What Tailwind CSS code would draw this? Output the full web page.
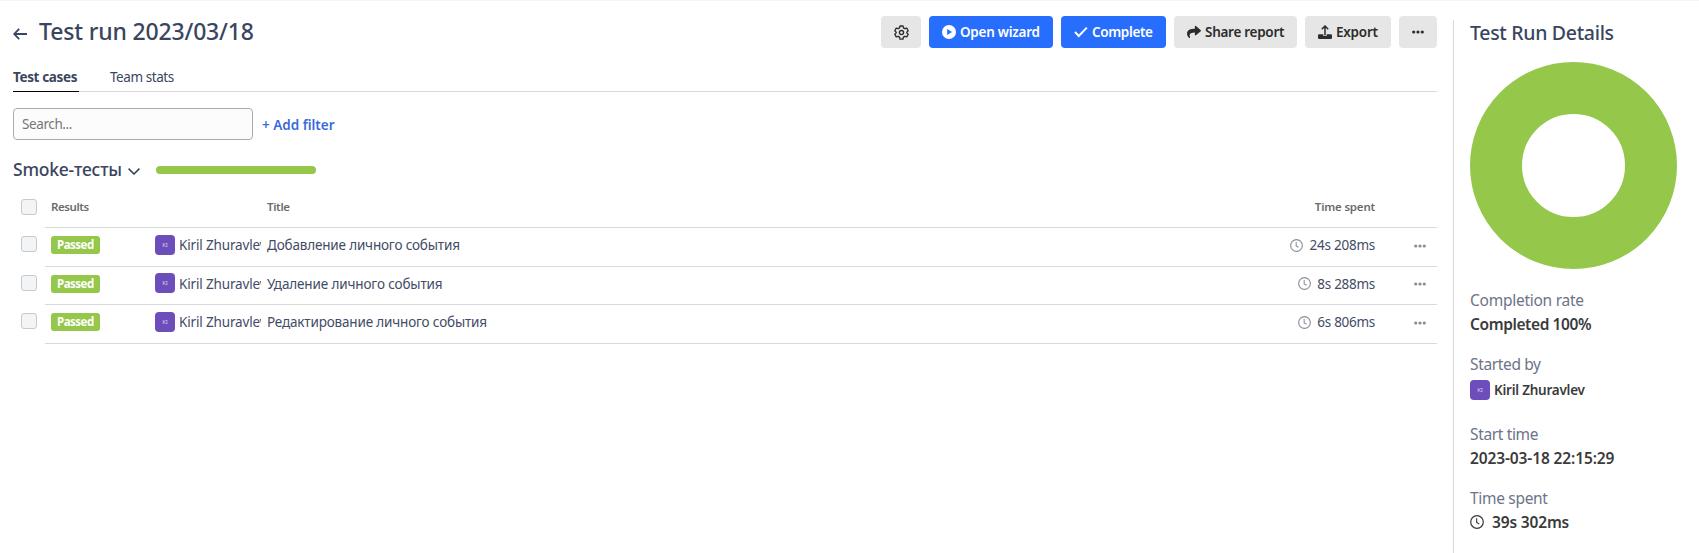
<!DOCTYPE html>
<html lang="en">
<head>
<meta charset="utf-8">
<title>Test run</title>
<script src="https://cdn.jsdelivr.net/npm/@tailwindcss/browser@4"></script>
</head>
<body class="h-[553px] overflow-hidden bg-white border-t border-[#f6f6f6] font-['Noto_Sans','Open_Sans',sans-serif] text-[13.5px] text-[#3a4560]">
<svg class="hidden">
  <symbol id="clock" viewBox="0 0 16 16"><circle cx="8" cy="8" r="7.2" fill="none" stroke="currentColor" stroke-width="1.4"/><path d="M7.6 3.8V8.6L10.6 10.2" fill="none" stroke="currentColor" stroke-width="1.3"/></symbol>
  <symbol id="dots" viewBox="0 0 12 4"><circle cx="1.7" cy="2" r="1.6"/><circle cx="6" cy="2" r="1.6"/><circle cx="10.3" cy="2" r="1.6"/></symbol>
</svg>
<div class="flex h-full">
  <main class="w-[1437px] pl-[13px] shrink-0">
    <header class="flex items-start justify-between h-[60px] pt-[15px]">
      <div class="flex items-center h-8">
        <svg class="w-[14px] h-3 mt-[3px]" viewBox="0 0 14 12" fill="none" stroke="currentColor" stroke-width="1.8"><path d="M14 6H1.2M6.2 .8L1.2 6L6.2 11.2"/></svg>
        <h1 class="ml-3 text-[23px] leading-8 font-medium whitespace-nowrap -mt-[3px] tracking-[-0.17px]">Test run 2023/03/18</h1>
      </div>
      <div class="flex gap-2 h-8 font-semibold leading-8 text-[#2c2c2c] whitespace-nowrap">
        <div class="w-10 rounded bg-[#e6e6e6] flex items-center justify-center"><svg class="w-[15px] h-[15px]" viewBox="0 0 24 24" fill="none" stroke="currentColor" stroke-width="2.2" stroke-linejoin="round"><path d="M9.6 1.5h4.800l.7 3 2.300 1.400 3-.9 2.300 4.200-2.200 2.200v1.200l2.200 2.200-2.300 4.200-3-.9-2.300 1.400-.7 3H9.600l-.7-3-2.300-1.400-3 .9-2.300-4.200 2.200-2.200v-1.200L1.300 9.200 3.600 5l3 .9 2.300-1.400z"/><circle cx="12" cy="12" r="3.300"/></svg></div>
        <div class="w-[124px] rounded bg-[#276dfe] text-white flex items-center pl-[13px] tracking-[-0.26px]"><svg class="w-[14px] h-[14px] mr-[4px]" viewBox="0 0 14 14"><circle cx="7" cy="7" r="7" fill="currentColor"/><path d="M5.200 4L10 7L5.200 10z" fill="#276dfe"/></svg>Open wizard</div>
        <div class="w-[105px] rounded bg-[#276dfe] text-white flex items-center pl-[13px] tracking-[-0.35px]"><svg class="w-[14px] h-[14px] mr-[4px]" viewBox="0 0 14 14" fill="none" stroke="currentColor" stroke-width="2"><path d="M1 7L4.800 11L12.800 2.600"/></svg>Complete</div>
        <div class="w-[123px] rounded bg-[#e6e6e6] flex items-center pl-[13px] tracking-[-0.28px]"><svg class="w-[14px] h-[14px] mr-[4px]" viewBox="0 0 512 512" fill="currentColor"><path d="M503.700 189.800L327.700 37.900C312.300 24.500 288 35.300 288 56v80C127.400 137.900 0 170.100 0 322.300c0 61.400 39.600 122.300 83.300 154.100 13.700 9.900 33.100-2.500 28.100-18.600C66.100 312.800 132.900 274.300 288 272.100V360c0 20.700 24.300 31.500 39.700 18.200l176-152c11.100-9.600 11.100-26.800 0-36.400z"/></svg>Share report</div>
        <div class="w-[86px] rounded bg-[#e6e6e6] flex items-center pl-[13px] tracking-[-0.24px]"><svg class="w-[14px] h-[14px] mr-[4px]" viewBox="0 0 14 14"><path d="M7 10V1.200M3.800 4.200L7 1L10.200 4.200" fill="none" stroke="currentColor" stroke-width="1.500"/><path d="M1.200 9.300H5.200V10.800H8.800V9.300H12.800Q14 9.300 14 10.500V12.800Q14 14 12.800 14H1.200Q0 14 0 12.800V10.500Q0 9.300 1.200 9.300z" fill="currentColor"/></svg>Export</div>
        <div class="w-[38px] rounded bg-[#e6e6e6] flex items-center justify-center"><svg class="w-3 h-1" fill="currentColor"><use href="#dots"/></svg></div>
      </div>
    </header>
    <nav class="flex h-[31px] border-b border-[#d9d9d9] leading-8 whitespace-nowrap">
      <div class="w-[66px] h-[31px] border-b border-black font-bold tracking-[-0.36px]">Test cases</div>
      <div class="ml-[31px] tracking-[-0.44px]">Team stats</div>
    </nav>
    <div class="flex mt-4 h-8 whitespace-nowrap">
      <div class="w-60 rounded border border-[#ababab] bg-[#fcfcfc] pl-2 leading-[30px] text-[#777] tracking-[-0.4px]">Search...</div>
      <div class="ml-[9px] leading-[34px] font-semibold text-[#3b68df]">+ Add filter</div>
    </div>
    <div class="flex items-center mt-[18px] h-6 whitespace-nowrap">
      <h2 class="text-[17.5px] leading-6 font-medium w-[109px] -mt-[2px] tracking-[-0.22px]">Smoke-тесты</h2>
      <svg class="ml-[6px] w-3 h-[7px] mt-[3px]" viewBox="0 0 12 7" fill="none" stroke="currentColor" stroke-width="1.600"><path d="M.6 .6L6 6L11.400 .6"/></svg>
      <div class="ml-4 w-40 h-2 rounded bg-[#94c74a]"></div>
    </div>
    <section class="mt-[6px] whitespace-nowrap text-[#424c66]">
      <div class="flex h-[40px]">
        <div class="w-8 pl-2 pt-[11px]"><div class="w-4 h-4 rounded-[3px] border border-[#c6c9ce] bg-[#f3f4f6]"></div></div>
        <div class="flex-1 flex border-b border-[#d9dadc] text-[11.5px] font-semibold text-[#6b6b6b] leading-[37px] pl-[6px]">
          <div class="w-[216px] tracking-[-0.43px]">Results</div><div class="flex-1 tracking-[-0.35px]">Title</div><div class="pr-[62px] tracking-[-0.2px]">Time spent</div>
        </div>
      </div>
      <div class="flex h-[39px]">
        <div class="w-8 pl-2 pt-2"><div class="w-4 h-4 rounded-[3px] border border-[#c6c9ce] bg-[#f3f4f6]"></div></div>
        <div class="flex-1 flex items-start border-b border-[#d9dadc] leading-[34px] pl-[6px]">
          <div class="w-[104px] pt-2"><div class="w-[49px] h-[18px] rounded-[3px] bg-[#94c74a] text-white text-[11.5px] font-bold leading-[18px] pl-[6px] tracking-[-0.5px]">Passed</div></div>
          <div class="w-5 h-5 mt-[7px] rounded bg-[#6c4dba] text-[#d8cff0] text-[6px] leading-5 text-center">KI</div>
          <div class="ml-[4px] w-[82px] overflow-hidden tracking-[-0.15px]">Kiril Zhuravlev</div>
          <div class="ml-[6px] flex-1 tracking-[-0.17px]">Добавление личного события</div>
          <svg class="w-[13px] h-[13px] mt-[11px] mr-[6px] text-[#8b8f9a]"><use href="#clock"/></svg><span class="tracking-[-0.24px]">24s 208ms</span>
          <svg class="w-3 h-1 mt-4 ml-[39px] mr-[11px] fill-[#8c8c8c]"><use href="#dots"/></svg>
        </div>
      </div>
      <div class="flex h-[38px]">
        <div class="w-8 pl-2 pt-2"><div class="w-4 h-4 rounded-[3px] border border-[#c6c9ce] bg-[#f3f4f6]"></div></div>
        <div class="flex-1 flex items-start border-b border-[#d9dadc] leading-[34px] pl-[6px]">
          <div class="w-[104px] pt-2"><div class="w-[49px] h-[18px] rounded-[3px] bg-[#94c74a] text-white text-[11.5px] font-bold leading-[18px] pl-[6px] tracking-[-0.5px]">Passed</div></div>
          <div class="w-5 h-5 mt-[6px] rounded bg-[#6c4dba] text-[#d8cff0] text-[6px] leading-5 text-center">KI</div>
          <div class="ml-[4px] w-[82px] overflow-hidden tracking-[-0.15px]">Kiril Zhuravlev</div>
          <div class="ml-[6px] flex-1 tracking-[-0.14px]">Удаление личного события</div>
          <svg class="w-[13px] h-[13px] mt-[10px] mr-[6px] text-[#8b8f9a]"><use href="#clock"/></svg><span class="tracking-[-0.28px]">8s 288ms</span>
          <svg class="w-3 h-1 mt-[15px] ml-[39px] mr-[11px] fill-[#8c8c8c]"><use href="#dots"/></svg>
        </div>
      </div>
      <div class="flex h-[39px]">
        <div class="w-8 pl-2 pt-2"><div class="w-4 h-4 rounded-[3px] border border-[#c6c9ce] bg-[#f3f4f6]"></div></div>
        <div class="flex-1 flex items-start border-b border-[#d9dadc] leading-[34px] pl-[6px]">
          <div class="w-[104px] pt-2"><div class="w-[49px] h-[18px] rounded-[3px] bg-[#94c74a] text-white text-[11.5px] font-bold leading-[18px] pl-[6px] tracking-[-0.5px]">Passed</div></div>
          <div class="w-5 h-5 mt-[7px] rounded bg-[#6c4dba] text-[#d8cff0] text-[6px] leading-5 text-center">KI</div>
          <div class="ml-[4px] w-[82px] overflow-hidden tracking-[-0.15px]">Kiril Zhuravlev</div>
          <div class="ml-[6px] flex-1 tracking-[-0.17px]">Редактирование личного события</div>
          <svg class="w-[13px] h-[13px] mt-[11px] mr-[6px] text-[#8b8f9a]"><use href="#clock"/></svg><span class="tracking-[-0.28px]">6s 806ms</span>
          <svg class="w-3 h-1 mt-4 ml-[39px] mr-[11px] fill-[#8c8c8c]"><use href="#dots"/></svg>
        </div>
      </div>
    </section>
  </main>
  <aside class="ml-4 mt-[19px] border-l border-[#d9d9d9] pl-4 flex-1 text-[15.5px] leading-6 font-semibold text-[#3b3b3b] whitespace-nowrap">
    <h2 class="text-[19.5px] leading-[26px] font-medium text-[#3a4560] tracking-[-0.31px]">Test Run Details</h2>
    <svg class="mt-4 w-[207px] h-[207px]" viewBox="0 0 207 207"><circle cx="103.500" cy="103.500" r="77.500" fill="none" stroke="#94c74a" stroke-width="52"/></svg>
    <div class="mt-[19px]">
      <div class="font-normal text-[#6d7388] tracking-[-0.26px]">Completion rate</div>
      <div class="tracking-[-0.4px]">Completed 100%</div>
    </div>
    <div class="mt-4">
      <div class="font-normal text-[#6d7388] tracking-[-0.36px]">Started by</div>
      <div class="flex items-center h-[28px] text-[13.5px] tracking-[-0.24px]"><div class="w-5 h-5 rounded bg-[#6c4dba] text-[#d8cff0] text-[6px] leading-5 text-center font-normal mr-1">KI</div>Kiril Zhuravlev</div>
    </div>
    <div class="mt-[18px]">
      <div class="font-normal text-[#6d7388] tracking-[-0.35px]">Start time</div>
      <div class="tracking-[-0.12px]">2023-03-18 22:15:29</div>
    </div>
    <div class="mt-4">
      <div class="font-normal text-[#6d7388] tracking-[-0.31px]">Time spent</div>
      <div class="flex items-center tracking-[-0.16px]"><svg class="w-[14px] h-[14px] mr-2"><use href="#clock"/></svg>39s 302ms</div>
    </div>
  </aside>
</div>
</body>
</html>
